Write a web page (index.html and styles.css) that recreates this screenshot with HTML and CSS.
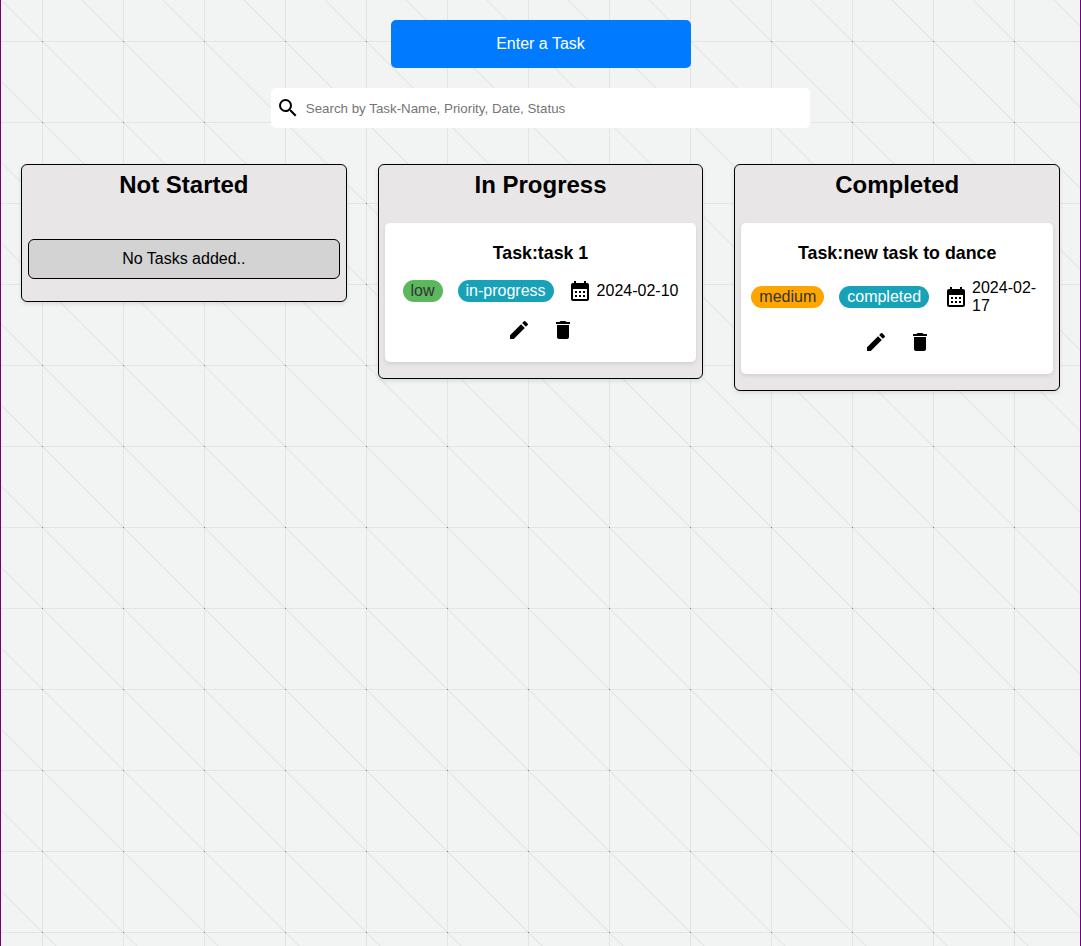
FILE: index.html
```html
<!DOCTYPE html>
<html lang="en">
<head>
<meta charset="utf-8">
<title>Task Board</title>
<link rel="stylesheet" href="styles.css">
</head>
<body>
<svg class="sprite" aria-hidden="true">
  <symbol id="search" viewBox="0 0 24 24"><path d="M15.5 14h-.79l-.28-.27A6.471 6.471 0 0 0 16 9.5 6.5 6.5 0 1 0 9.5 16c1.61 0 3.09-.59 4.23-1.57l.27.28v.79l5 4.99L20.49 19l-4.99-5zm-6 0C7.01 14 5 11.99 5 9.5S7.01 5 9.5 5 14 7.01 14 9.5 11.99 14 9.5 14z"/></symbol>
  <symbol id="calendar" viewBox="0 0 24 24"><path d="M19 4h-1V2h-2v2H8V2H6v2H5c-1.11 0-1.99.9-1.99 2L3 20a2 2 0 0 0 2 2h14c1.1 0 2-.9 2-2V6c0-1.1-.9-2-2-2zm0 16H5V10h14v10zM9 14H7v-2h2v2zm4 0h-2v-2h2v2zm4 0h-2v-2h2v2zm-8 4H7v-2h2v2zm4 0h-2v-2h2v2zm4 0h-2v-2h2v2z"/></symbol>
  <symbol id="edit" viewBox="0 0 24 24"><path d="M3 17.25V21h3.75L17.81 9.94l-3.75-3.75L3 17.25zM20.71 7.04a.996.996 0 0 0 0-1.41l-2.34-2.34a.996.996 0 0 0-1.41 0l-1.83 1.83 3.75 3.75 1.83-1.83z"/></symbol>
  <symbol id="delete" viewBox="0 0 24 24"><path d="M6 19c0 1.1.9 2 2 2h8c1.1 0 2-.9 2-2V7H6v12zM19 4h-3.5l-1-1h-5l-1 1H5v2h14V4z"/></symbol>
</svg>
<main class="app">
  <button class="add-task">Enter a Task</button>
  <label class="search">
    <svg class="icon"><use href="#search"/></svg>
    <input class="search-input" type="text" placeholder="Search by Task-Name, Priority, Date, Status">
  </label>
  <div class="board">
    <section class="column">
      <h2 class="column-title">Not Started</h2>
      <p class="empty">No Tasks added..</p>
    </section>
    <section class="column">
      <h2 class="column-title">In Progress</h2>
      <article class="card">
        <h3 class="card-title">Task:task 1</h3>
        <div class="details">
          <span class="pill low">low</span>
          <span class="pill status">in-progress</span>
          <span class="date"><svg class="icon"><use href="#calendar"/></svg><span>2024-02-10</span></span>
        </div>
        <div class="actions">
          <svg class="icon"><use href="#edit"/></svg>
          <svg class="icon"><use href="#delete"/></svg>
        </div>
      </article>
    </section>
    <section class="column">
      <h2 class="column-title">Completed</h2>
      <article class="card">
        <h3 class="card-title">Task:new task to dance</h3>
        <div class="details">
          <span class="pill medium">medium</span>
          <span class="pill status">completed</span>
          <span class="date"><svg class="icon"><use href="#calendar"/></svg><span>2024-02-17</span></span>
        </div>
        <div class="actions">
          <svg class="icon"><use href="#edit"/></svg>
          <svg class="icon"><use href="#delete"/></svg>
        </div>
      </article>
    </section>
  </div>
</main>
</body>
</html>
```

FILE: styles.css
```css
* {
  box-sizing: border-box;
}

body {
  margin: 0;
  font: 16px/18px Arial, "Liberation Sans", sans-serif;
  color: #000;
}

.sprite {
  display: none;
}

/* Grid pattern: crossing dots, vertical lines, horizontal lines, diagonals */
.app {
  display: flex;
  flex-direction: column;
  align-items: center;
  min-height: 100vh;
  padding: 20px;
  border: solid #6f0080;
  border-width: 0 1px;
  background-color: #f2f4f3;
  background-image:
    conic-gradient(from 90deg at 80px 80px, #808080 90deg, transparent 0),
    conic-gradient(from 0deg at 80px 0, transparent 90deg, #e3e5e4 0 180deg, transparent 0),
    conic-gradient(from 90deg at 0 80px, #e3e5e4 90deg, transparent 0),
    linear-gradient(45deg, transparent 49.2%, #e4e6e5 49.8%, #e4e6e5 50.2%, transparent 50.8%);
  background-size: 81px 81px;
  background-position: 42px 42px, 42px 42px, 42px 42px, 0 0;
}

.add-task {
  width: 300px;
  height: 48px;
  padding: 0;
  border: 0;
  border-radius: 5px;
  background: #007bff;
  color: #fff;
  font: inherit;
}

.search {
  display: flex;
  align-items: center;
  width: 539.5px;
  height: 40px;
  margin-top: 20px;
  padding-left: 5px;
  border-radius: 5px;
  background: #fff;
}

.search-input {
  flex: 1;
  margin-left: 4px;
  padding: 1px 2px;
  border: 0;
  outline: 0;
  background: transparent;
  font: 13.333px Arial, "Liberation Sans", sans-serif;
}

.search-input::placeholder {
  color: #757575;
}

.icon {
  display: block;
  flex: none;
  width: 24px;
  height: 24px;
  fill: currentColor;
}

.board {
  display: grid;
  grid-template-columns: repeat(3, 1fr);
  gap: 31px;
  align-items: start;
  align-self: stretch;
  margin-top: 36px;
}

.column {
  padding: 6px 6px 16px;
  border: 1px solid #000;
  border-radius: 6px;
  background: #e9e6e7;
  box-shadow: 0 2px 4px rgba(0, 0, 0, 0.1);
  text-align: center;
}

.column-title {
  margin: 0 0 25px;
  font-size: 24px;
  line-height: 27px;
}

.empty {
  margin: 41px 0 6px;
  padding: 10px;
  border: 1px solid #000;
  border-radius: 6px;
  background: #d3d3d3;
}

.card {
  padding: 20px 10px;
  border-radius: 5px;
  background: #fff;
  box-shadow: 0 2px 4px rgba(0, 0, 0, 0.1);
}

.card-title {
  margin: 0 0 15px;
  font-size: 17.8px;
  line-height: 21px;
}

.details {
  display: flex;
  justify-content: center;
  align-items: center;
  gap: 15px;
}

.pill {
  flex: none;
  padding: 2px 8px;
  border-radius: 11px;
}

.low {
  background: #5cb85c;
  color: #333;
}

.medium {
  background: #ffa500;
  color: #333;
}

.status {
  background: #17a2b8;
  color: #fff;
}

.date {
  display: flex;
  align-items: center;
  gap: 4px;
  text-align: left;
}

.date .icon {
  margin: 0 0.4px 0 -0.4px;
}

.actions {
  display: flex;
  justify-content: center;
  gap: 20px;
  margin-top: 15px;
  padding-left: 1px;
}
```
